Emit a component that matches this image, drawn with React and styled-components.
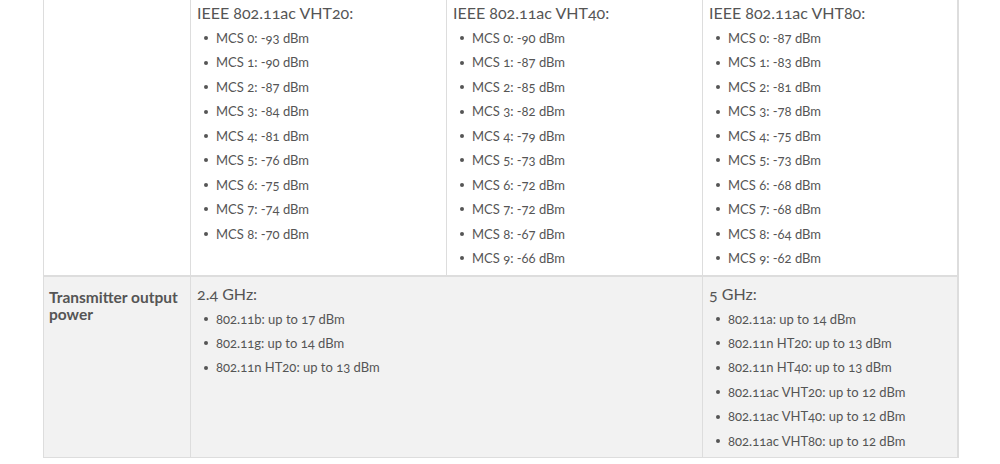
import styled, { createGlobalStyle } from "styled-components";

const GlobalStyle = createGlobalStyle`
    html, body {
        margin: 0;
        padding: 0;
        background: #fff;
        overflow: hidden;
    }
    body {
        font-family: Lato, "Open Sans", "DejaVu Sans", sans-serif;
        color: #555;
        font-variant-numeric: oldstyle-nums;
    }
`;

const Spec = styled.table`
    margin: -5px 0 0 43px;
    width: 916px;
    border-collapse: collapse;
    table-layout: fixed;
    border-right: 2px solid #ddd;
`;

const Row = styled.tr`
    background: ${(p) => (p.$shade ? "#f2f2f2" : "#fff")};
`;

const Cell = styled.td`
    border: 1px solid #ddd;
    border-top-width: ${(p) => (p.$thick ? "2px" : "1px")};
    vertical-align: top;
    padding: 7px 6px 4px 6px;
`;

const Label = styled(Cell)`
    padding: 12px 5px 4px 5px;
    font-weight: bold;
    font-size: 15.5px;
    line-height: 17px;
`;

const Heading = styled.div`
    font-size: 16px;
    line-height: 20px;
`;

const List = styled.ul`
    list-style: none;
    margin: 3px 0 0 0;
    padding: 0;
`;

const Item = styled.li`
    display: flex;
    align-items: center;
    font-size: 13px;
    line-height: 24.45px;
    white-space: nowrap;

    &::before {
        content: "";
        width: 4px;
        height: 4px;
        border-radius: 50%;
        background: #555;
        margin: 0 8px 0 7px;
        flex: none;
    }
`;

const sensitivity = [
    { title: "IEEE 802.11ac VHT20:", values: [-93, -90, -87, -84, -81, -76, -75, -74, -70] },
    { title: "IEEE 802.11ac VHT40:", values: [-90, -87, -85, -82, -79, -73, -72, -72, -67, -66] },
    { title: "IEEE 802.11ac VHT80:", values: [-87, -83, -81, -78, -75, -73, -68, -68, -64, -62] },
];

const power24 = ["802.11b: up to 17 dBm", "802.11g: up to 14 dBm", "802.11n HT20: up to 13 dBm"];
const power5 = [
    "802.11a: up to 14 dBm",
    "802.11n HT20: up to 13 dBm",
    "802.11n HT40: up to 13 dBm",
    "802.11ac VHT20: up to 12 dBm",
    "802.11ac VHT40: up to 12 dBm",
    "802.11ac VHT80: up to 12 dBm",
];

const Group = ({ title, items }) => (
    <>
        <Heading>{title}</Heading>
        <List>
            {items.map((text, index) => (
                <Item key={index}>{text}</Item>
            ))}
        </List>
    </>
);

const App = () => {
    return (
        <>
            <GlobalStyle />
            <Spec>
                <colgroup>
                    <col style={{ width: 147 }} />
                    <col style={{ width: 256 }} />
                    <col style={{ width: 256 }} />
                    <col />
                </colgroup>
                <tbody>
                    <Row>
                        <Cell></Cell>
                        {sensitivity.map((group) => (
                            <Cell key={group.title}>
                                <Group
                                    title={group.title}
                                    items={group.values.map((v, i) => `MCS ${i}: ${v} dBm`)}
                                />
                            </Cell>
                        ))}
                    </Row>
                    <Row $shade>
                        <Label $thick>Transmitter output power</Label>
                        <Cell $thick colSpan={2}>
                            <Group title="2.4 GHz:" items={power24} />
                        </Cell>
                        <Cell $thick>
                            <Group title="5 GHz:" items={power5} />
                        </Cell>
                    </Row>
                </tbody>
            </Spec>
        </>
    );
};

export default App;
